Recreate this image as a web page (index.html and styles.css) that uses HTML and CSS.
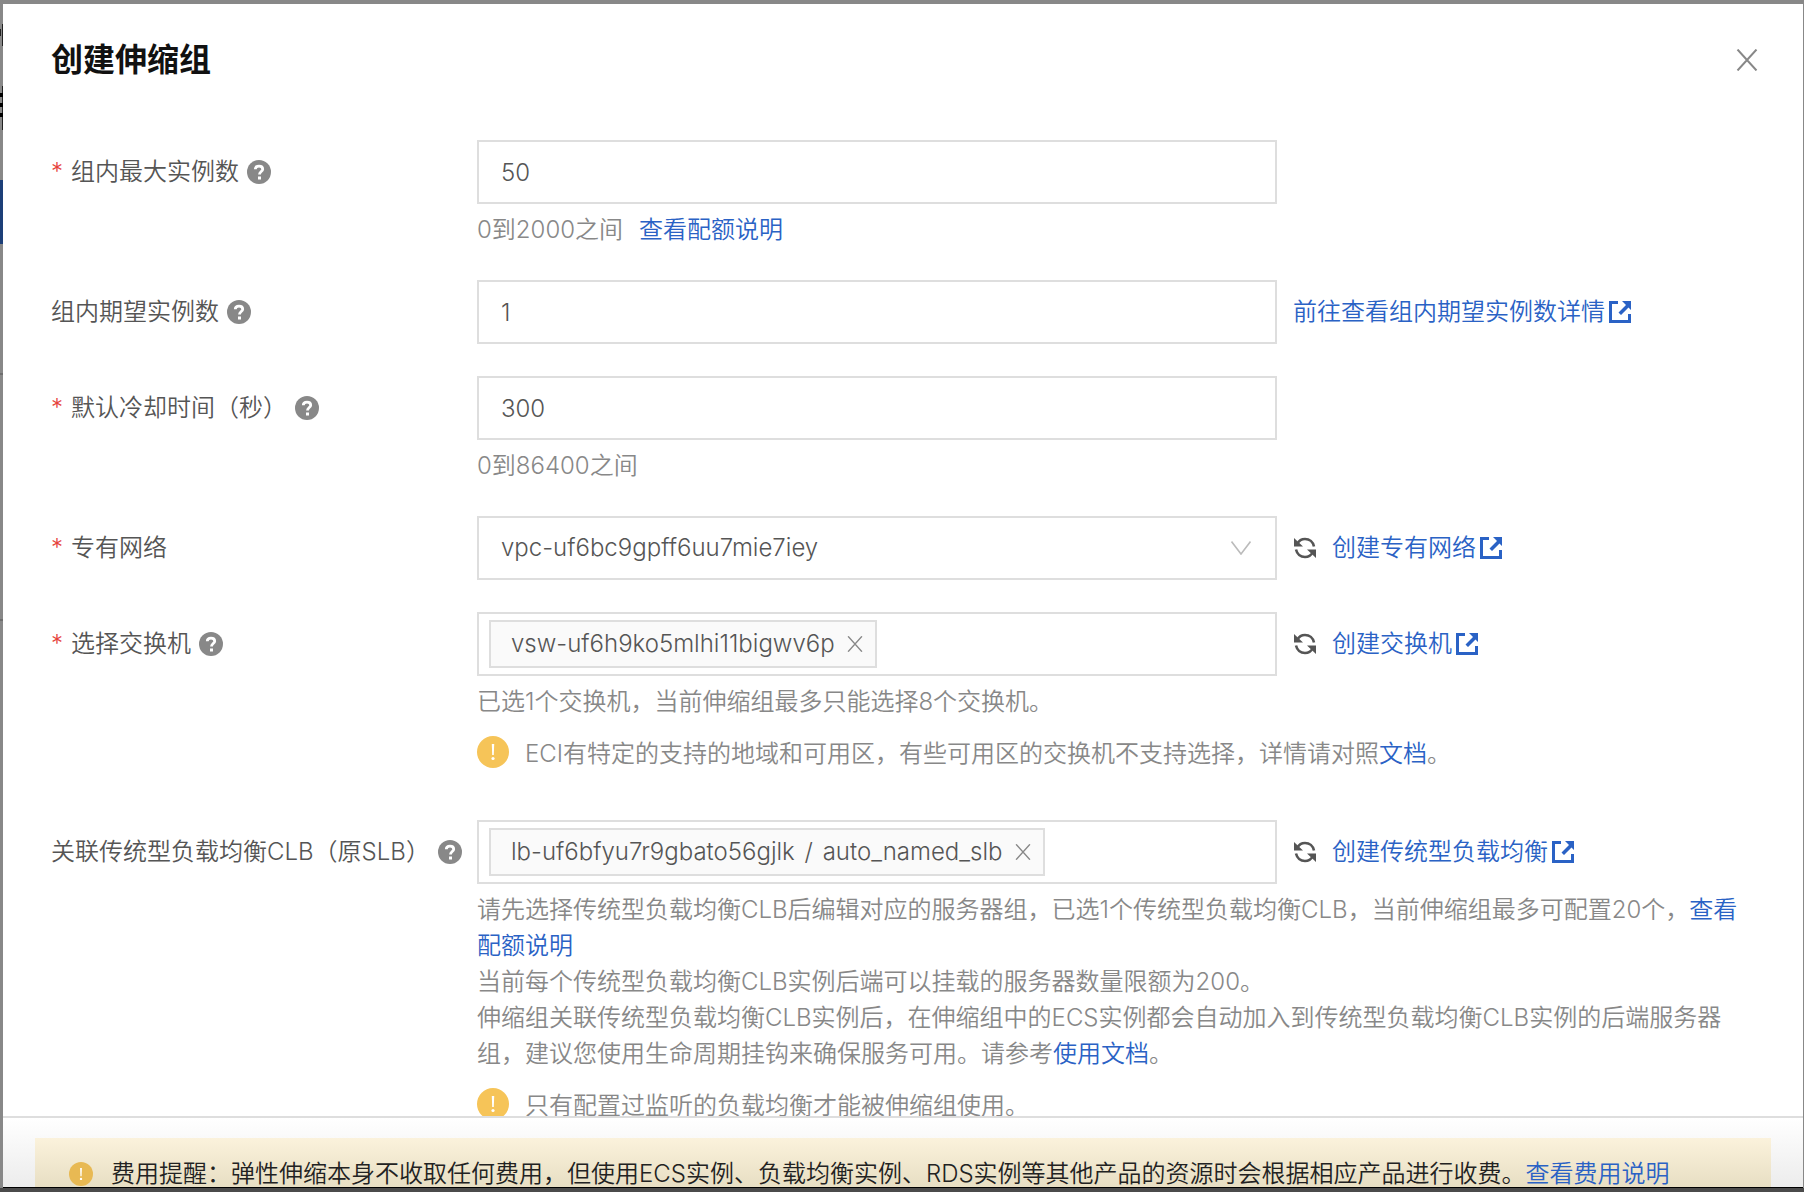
FILE: index.html
```html
<!DOCTYPE html>
<html lang="zh-CN">
<head>
<meta charset="utf-8">
<title>创建伸缩组</title>
<link rel="stylesheet" href="styles.css">
</head>
<body>
<svg class="sprite" aria-hidden="true">
  <symbol id="help" viewBox="0 0 24 24">
    <circle cx="12" cy="12" r="12" fill="currentColor"/>
    <path d="M8.300 9.300C8.300 7.300 9.900 6.200 12 6.200s3.700 1.200 3.700 3c0 2.400-3.200 2.300-3.200 5.200" fill="none" stroke="#fff" stroke-width="2.800"/>
    <rect x="11" y="16.500" width="3" height="3" fill="#fff"/>
  </symbol>
  <symbol id="warn" viewBox="0 0 32 32">
    <circle cx="16" cy="16" r="16" fill="currentColor"/>
    <path d="M14.800 8h2.400l-.4 11h-1.600z" fill="#fff"/>
    <circle cx="16" cy="22.500" r="1.600" fill="#fff"/>
  </symbol>
  <symbol id="external" viewBox="0 0 22 22">
    <path d="M9 1.500H1.500v19h19V13" fill="none" stroke="currentColor" stroke-width="3"/>
    <path d="M13 0H22v9l-2.500-2.500-7.500 7.500-2.500-2.500 7.500-7.500z" fill="currentColor"/>
  </symbol>
  <symbol id="refresh" viewBox="0 0 22 22">
    <path d="M3.500 6.500C5 3.500 8 2 11 2c4.500 0 8 3 9 7.500M18.500 15.500C17 18.500 14 20 11 20c-4.500 0-8-3-9-7.500" fill="none" stroke="currentColor" stroke-width="2.600"/>
    <path d="M0 1v8.500h9zM22 21v-8.500h-9z" fill="currentColor"/>
  </symbol>
  <symbol id="cross" viewBox="0 0 22 22">
    <path d="M1.500 0.500l19 21M20.500 0.500l-19 21" fill="none" stroke="currentColor" stroke-width="2"/>
  </symbol>
  <symbol id="arrow" viewBox="0 0 20 14">
    <path d="M.5.500L10 13 19.500.500" fill="none" stroke="currentColor" stroke-width="1.600"/>
  </symbol>
</svg>
<main class="panel">
  <header class="head">
    <h1 class="title">创建伸缩组</h1>
    <button class="close" type="button" aria-label="关闭"><svg class="i22"><use href="#cross"/></svg></button>
  </header>
  <form class="form">
    <div class="row">
      <div class="label"><span class="req">*</span><label for="max">组内最大实例数</label><svg class="help"><use href="#help"/></svg></div>
      <div class="field">
        <div class="line"><input class="box" id="max" type="text" value="50"></div>
        <p class="tip">0到2000之间<a class="apart" href="#">查看配额说明</a></p>
      </div>
    </div>
    <div class="row">
      <div class="label"><label for="want">组内期望实例数</label><svg class="help"><use href="#help"/></svg></div>
      <div class="field">
        <div class="line"><input class="box" id="want" type="text" value="1"><a class="ext" href="#">前往查看组内期望实例数详情<svg class="i22"><use href="#external"/></svg></a></div>
      </div>
    </div>
    <div class="row">
      <div class="label"><span class="req">*</span><label for="cool">默认冷却时间（秒）</label><svg class="help"><use href="#help"/></svg></div>
      <div class="field">
        <div class="line"><input class="box" id="cool" type="text" value="300"></div>
        <p class="tip">0到86400之间</p>
      </div>
    </div>
    <div class="row">
      <div class="label"><span class="req">*</span><label for="vpc">专有网络</label></div>
      <div class="field">
        <div class="line">
          <div class="pick"><select class="box" id="vpc"><option>vpc-uf6bc9gpff6uu7mie7iey</option></select><svg class="arrow"><use href="#arrow"/></svg></div>
          <button class="reload" type="button" aria-label="刷新"><svg class="i22"><use href="#refresh"/></svg></button>
          <a class="ext" href="#">创建专有网络<svg class="i22"><use href="#external"/></svg></a>
        </div>
      </div>
    </div>
    <div class="row">
      <div class="label"><span class="req">*</span><label for="vsw">选择交换机</label><svg class="help"><use href="#help"/></svg></div>
      <div class="field">
        <div class="line">
          <div class="box tags"><span class="tag">vsw-uf6h9ko5mlhi11bigwv6p<button class="drop" type="button" aria-label="移除"><svg class="i16"><use href="#cross"/></svg></button></span><input class="entry" id="vsw" type="text"></div>
          <button class="reload" type="button" aria-label="刷新"><svg class="i22"><use href="#refresh"/></svg></button>
          <a class="ext" href="#">创建交换机<svg class="i22"><use href="#external"/></svg></a>
        </div>
        <p class="tip">已选1个交换机，当前伸缩组最多只能选择8个交换机。</p>
        <p class="note"><svg class="warn"><use href="#warn"/></svg><span>ECI有特定的支持的地域和可用区，有些可用区的交换机不支持选择，详情请对照<a href="#">文档</a>。</span></p>
      </div>
    </div>
    <div class="row">
      <div class="label"><label for="clb">关联传统型负载均衡CLB（原SLB）</label><svg class="help"><use href="#help"/></svg></div>
      <div class="field">
        <div class="line">
          <div class="box tags"><span class="tag"><span>lb-uf6bfyu7r9gbato56gjlk <span class="slash">/</span> auto_named_slb</span><button class="drop" type="button" aria-label="移除"><svg class="i16"><use href="#cross"/></svg></button></span><input class="entry" id="clb" type="text"></div>
          <button class="reload" type="button" aria-label="刷新"><svg class="i22"><use href="#refresh"/></svg></button>
          <a class="ext" href="#">创建传统型负载均衡<svg class="i22"><use href="#external"/></svg></a>
        </div>
        <p class="tip">请先选择传统型负载均衡CLB后编辑对应的服务器组，已选1个传统型负载均衡CLB，当前伸缩组最多可配置20个，<a href="#">查看配额说明</a><br>当前每个传统型负载均衡CLB实例后端可以挂载的服务器数量限额为200。<br>伸缩组关联传统型负载均衡CLB实例后，在伸缩组中的ECS实例都会自动加入到传统型负载均衡CLB实例的后端服务器组，建议您使用生命周期挂钩来确保服务可用。请参考<a href="#">使用文档</a>。</p>
        <p class="note"><svg class="warn"><use href="#warn"/></svg><span>只有配置过监听的负载均衡才能被伸缩组使用。</span></p>
      </div>
    </div>
  </form>
  <footer class="foot">
    <p class="fee"><svg class="coin"><use href="#warn"/></svg><span>费用提醒：弹性伸缩本身不收取任何费用，但使用ECS实例、负载均衡实例、RDS实例等其他产品的资源时会根据相应产品进行收费。<a href="#">查看费用说明</a></span></p>
  </footer>
</main>
</body>
</html>
```

FILE: styles.css
```css
* { box-sizing: border-box; }

body {
  margin: 0;
  height: 100vh;
  padding: 4px 1px 4px 3px;
  display: flex;
  overflow: hidden;
  /* the dimmed page that shows round the panel's edges */
  background:
    linear-gradient(#1d3f78, #1d3f78) 0 180px / 3px 64px no-repeat,
    linear-gradient(#222, #222) 2px 24px / 1px 22px no-repeat,
    linear-gradient(#222, #222) 0 29px / 1px 7px no-repeat,
    linear-gradient(#000, #000) 0 93px / 3px 4px no-repeat,
    linear-gradient(#000, #000) 0 103px / 3px 4px no-repeat,
    linear-gradient(#000, #000) 0 113px / 3px 4px no-repeat,
    linear-gradient(#222, #222) 2px 86px / 1px 44px no-repeat,
    linear-gradient(#6e6e6e, #6e6e6e) 0 373px / 3px 2px no-repeat,
    linear-gradient(#6e6e6e, #6e6e6e) 0 619px / 3px 2px no-repeat,
    linear-gradient(#4b4b4b, #4b4b4b) 0 100% / 100% 4px no-repeat,
    #888;
  color: #555;
  font: 350 24px/36px Inter, "Noto Sans CJK SC", sans-serif;
}

.sprite { position: absolute; width: 0; height: 0; }
svg { flex: none; }
p, h1 { margin: 0; }
a { color: #2a62c5; text-decoration: none; }
button { padding: 0; border: 0; background: none; color: #555; display: flex; }

.panel {
  flex: 1;
  min-width: 0;
  display: flex;
  flex-direction: column;
  background: #fff;
  border-bottom: 1px solid #000;
}

.head {
  flex: none;
  display: flex;
  align-items: center;
  justify-content: space-between;
  padding: 32px 45px 32px 48px;
}
.title { color: #111; font-size: 32px; line-height: 48px; font-weight: 700; }
.close { color: #888; }
.i22 { width: 22px; height: 22px; }
.i16 { width: 16px; height: 16px; }

.form {
  flex: 1;
  min-height: 0;
  overflow: hidden;
  display: flex;
  flex-direction: column;
  gap: 32px;
  padding: 24px 48px 0;
}
.row { flex: none; display: flex; }
.label {
  flex: none;
  width: 426px;
  height: 64px;
  display: flex;
  align-items: center;
  white-space: nowrap;
}
.req { width: 20px; color: #e6423c; }
.help { width: 24px; height: 24px; margin-left: 8px; color: #888; }
.field { flex: 1; min-width: 0; }
.line { display: flex; align-items: center; }

.box {
  width: 800px;
  height: 64px;
  padding: 0 22px;
  border: 2px solid #dedede;
  border-radius: 0;
  background: #fff;
  color: #555;
  font: inherit;
  appearance: none;
}
.pick { display: grid; align-items: center; }
.pick > * { grid-area: 1 / 1; }
.arrow { width: 20px; height: 14px; margin-right: 26px; justify-self: end; color: #bbb; pointer-events: none; }
.tags { display: flex; align-items: center; padding: 0 10px; }
.tag {
  display: flex;
  align-items: center;
  gap: 12px;
  height: 48px;
  padding: 0 12px 0 20px;
  border: 2px solid #dedede;
  background: #fafafa;
  white-space: nowrap;
}
.slash { margin: 0 3px; }
.drop { color: #888; }
.entry { flex: 1; min-width: 0; border: 0; padding: 0; background: none; font: inherit; }

.reload { margin-left: 17px; }
.ext { display: flex; align-items: center; gap: 4px; margin-left: 16px; white-space: nowrap; }

.tip { margin-top: 8px; color: #888; }
.apart { margin-left: 16px; }
.note { display: flex; gap: 16px; padding: 16px 0; color: #888; }
.warn { width: 32px; height: 32px; color: #f6c458; }

.foot {
  flex: 0 0 71px;
  overflow: hidden;
  padding: 20px 32px 0;
  border-top: 2px solid #dedede;
  background: linear-gradient(#fff, #ececec);
}
.fee {
  display: flex;
  align-items: center;
  gap: 18px;
  height: 96px;
  padding: 0 34px 24px;
  color: #222;
  white-space: nowrap;
  background: linear-gradient(#fbf2dc, #e7dec3 50px);
}
.coin { width: 24px; height: 24px; color: #e8b953; }
```
